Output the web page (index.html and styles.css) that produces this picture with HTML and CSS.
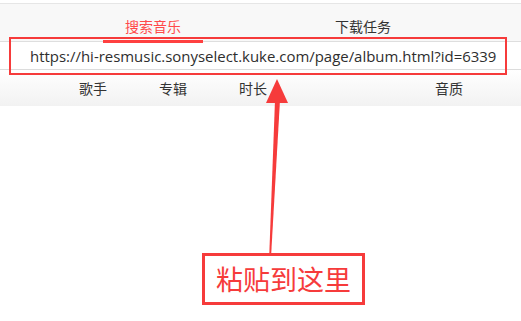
FILE: index.html
```html
<!DOCTYPE html>
<html lang="zh">
<head>
<meta charset="utf-8">
<link rel="stylesheet" href="styles.css">
</head>
<body>
<div class="page">
  <div class="top-gap"></div>
  <div class="tabs">
    <div class="tab active"><span>搜索音乐</span></div>
    <div class="tab"><span>下载任务</span></div>
  </div>
  <div class="url-row">
    <span class="url">https://hi-resmusic.sonyselect.kuke.com/page/album.html?id=6339</span>
  </div>
  <div class="header">
    <span class="col">歌手</span>
    <span class="col">专辑</span>
    <span class="col">时长</span>
    <span class="spacer"></span>
    <span class="col">音质</span>
  </div>
  <div class="highlight"></div>
  <svg class="arrow" width="521" height="321" viewBox="0 0 521 321">
    <polygon points="277,79 266,103 288,103" fill="#f63b3b"/>
    <polygon points="275,100 280,100 271.2,254 269.3,254" fill="#f63b3b"/>
  </svg>
  <div class="callout">粘贴到这里</div>
</div>
</body>
</html>
```
FILE: styles.css
```css
html, body {
  margin: 0;
  padding: 0;
  background: #ffffff;
}
.page {
  position: relative;
  width: 521px;
  height: 321px;
  overflow: hidden;
  font-family: "Noto Sans CJK SC", "Noto Sans", sans-serif;
  color: #333333;
}
.top-gap {
  height: 3px;
  background: #ffffff;
  border-bottom: 1px solid #e6e6e6;
}
.tabs {
  display: flex;
  padding-left: 48px;
  height: 37px;
  background: #f8f8f8;
  border-bottom: 1px solid #dedede;
}
.tab {
  width: 210px;
  display: flex;
  justify-content: center;
  font-size: 14px;
  line-height: 20px;
  padding-top: 12px;
  box-sizing: border-box;
  position: relative;
  color: #333333;
}
.tab.active {
  color: #ff4a4a;
}
.tab.active::after {
  content: "";
  position: absolute;
  left: 55px;
  width: 100px;
  bottom: -2px;
  height: 3px;
  background: #ff4040;
}
.url-row {
  height: 27px;
  background: #ffffff;
  border-bottom: 1px solid #dcdcdc;
  display: flex;
  align-items: center;
  padding-left: 30px;
}
.url {
  font-family: "Open Sans", "Noto Sans", sans-serif;
  font-size: 14.95px;
  color: #2e2e2e;
  letter-spacing: 0;
  white-space: nowrap;
}
.header {
  display: flex;
  align-items: center;
  height: 36px;
  padding-left: 53px;
  background: linear-gradient(#ffffff, #f2f2f2);
  font-size: 14px;
  color: #333333;
}
.col {
  width: 80px;
  text-align: center;
}
.spacer {
  width: 116px;
}
.highlight {
  position: absolute;
  left: 9px;
  top: 37px;
  width: 494px;
  height: 34px;
  border: 2px solid #f63b3b;
}
.arrow {
  position: absolute;
  left: 0;
  top: 0;
}
.callout {
  position: absolute;
  left: 202px;
  top: 253px;
  width: 157px;
  height: 46px;
  border: 3px solid #f63b3b;
  background: #ffffff;
  color: #f63b3b;
  font-size: 27px;
  line-height: 46px;
  text-align: center;
}
```
